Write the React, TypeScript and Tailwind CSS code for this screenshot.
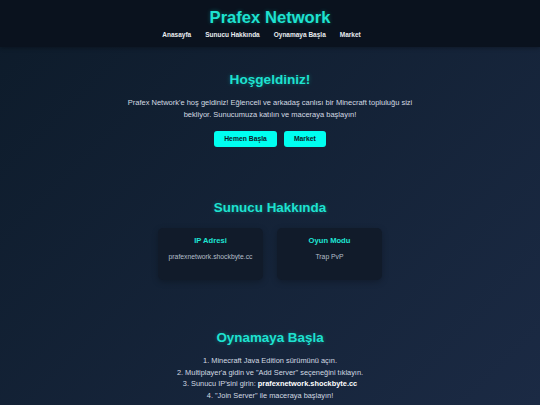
import React from 'react';

const navLinks = ['Anasayfa', 'Sunucu Hakkında', 'Oynamaya Başla', 'Market'];

const steps: React.ReactNode[] = [
  '1. Minecraft Java Edition sürümünü açın.',
  '2. Multiplayer\'a gidin ve "Add Server" seçeneğini tıklayın.',
  <>
    3. Sunucu IP'sini girin: <strong className="font-bold text-white">prafexnetwork.shockbyte.cc</strong>
  </>,
  '4. "Join Server" ile maceraya başlayın!',
];

const glow = '[text-shadow:0_0_4px_rgba(0,255,230,0.3)]';

const InfoCard = ({ title, value }: { title: string; value: string }) => (
  <div className="w-[105px] h-[52px] bg-[#111b2a] rounded-[5px] pt-[8px] flex flex-col items-center shadow-[0_2px_6px_rgba(0,0,0,0.25)]">
    <h3 className="text-[7.6px] leading-[10px] font-bold text-[#1ee6d4]">{title}</h3>
    <p className="mt-[6px] text-[6.8px] leading-[10px] text-[#b4bec9]">{value}</p>
  </div>
);

export default function App() {
  return (
    <div
      className="min-h-[405px] w-full bg-[linear-gradient(135deg,#0d1b2a,#1b2a44)] text-center"
      style={{ fontFamily: '"Liberation Sans", Arial, sans-serif' }}
    >
      <header className="h-[47px] bg-[#0a121e] pt-[7.5px] flex flex-col items-center shadow-[0_1px_4px_rgba(0,0,0,0.3)]">
        <h1 className={`text-[16.6px] leading-[20px] font-bold text-[#1ee2d0] ${glow}`}>Prafex Network</h1>
        <nav className="mt-[2.5px] pr-[17px] flex gap-[14px]">
          {navLinks.map((link) => (
            <a key={link} href="#" className="text-[6.5px] leading-[10px] font-bold text-[#e8ecf0]">
              {link}
            </a>
          ))}
        </nav>
      </header>

      <section className="pt-[25px] flex flex-col items-center">
        <h2 className={`text-[13.6px] leading-[16px] font-bold text-[#1ee2d0] ${glow}`}>Hoşgeldiniz!</h2>
        <p className="mt-[9px] max-w-[296px] text-[7.5px] leading-[12px] text-[#d3dae2]">
          Prafex Network'e hoş geldiniz! Eğlenceli ve arkadaş canlısı bir Minecraft topluluğu sizi bekliyor. Sunucumuza katılın ve maceraya başlayın!
        </p>
        <div className="mt-[10px] flex gap-[7px]">
          <a href="#" className="h-[16px] px-[10px] rounded-[3px] bg-[#00fff0] text-[#0d1b2a] text-[6.8px] font-bold flex items-center">
            Hemen Başla
          </a>
          <a href="#" className="h-[16px] px-[10px] rounded-[3px] bg-[#00fff0] text-[#0d1b2a] text-[6.8px] font-bold flex items-center">
            Market
          </a>
        </div>
      </section>

      <section className="pt-[53px] flex flex-col items-center">
        <h2 className={`text-[13.4px] leading-[16px] font-bold text-[#1ee2d0] ${glow}`}>Sunucu Hakkında</h2>
        <div className="mt-[12px] flex gap-[14px]">
          <InfoCard title="IP Adresi" value="prafexnetwork.shockbyte.cc" />
          <InfoCard title="Oyun Modu" value="Trap PvP" />
        </div>
      </section>

      <section className="pt-[50px] flex flex-col items-center">
        <h2 className={`text-[13.4px] leading-[16px] font-bold text-[#1ee2d0] ${glow}`}>Oynamaya Başla</h2>
        <ol className="mt-[9px] text-[7.4px] leading-[11.6px] text-[#d3dae2]">
          {steps.map((step, i) => (
            <li key={i}>{step}</li>
          ))}
        </ol>
      </section>
    </div>
  );
}
